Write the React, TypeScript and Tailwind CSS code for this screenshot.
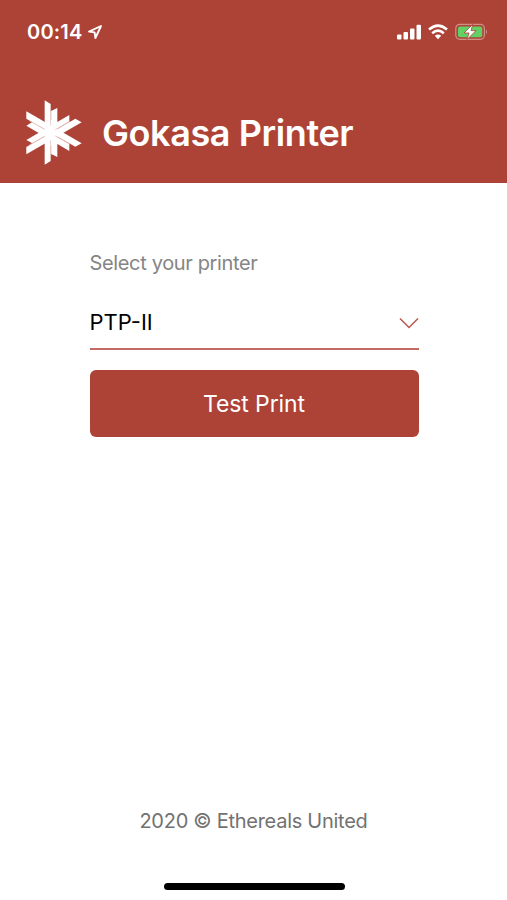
import React, { useState } from "react";

interface IconProps {
  className?: string;
}

const Logo: React.FC<IconProps> = ({ className }) => (
  <svg viewBox="48 30 168 195" className={className} fill="#fff">
    <polygon points="104,31 122,42 122,213 104,224" />
    <polygon points="122,64 142,54 142,201 122,191" />
    <polygon points="49,64 215,160 196,170 49,86" />
    <polygon points="49,193 49,171 196,86 215,97" />
    <path d="M49 107L67 96L178 161V183Z" />
    <path d="M49 150L178 75V96L67 160Z" />
    <path
      d="M58 92L104 118M58 165L104 139M136 119L178 94M136 138L178 162M123 60V90M123 168V195"
      fill="none"
      stroke="#e6bab5"
      strokeWidth="2.5"
    />
  </svg>
);

const StatusBar: React.FC = () => (
  <div className="flex justify-between items-center h-16 pl-[27px] pr-[18px] text-white">
    <div className="flex items-center gap-1">
      <span className="text-[20px] leading-6 font-semibold tracking-[0.2px]">
        00:14
      </span>
      <svg viewBox="0 0 16 16" className="w-4 h-4" fill="none" stroke="#fff">
        <path
          d="M14 2L2 7.6L7.6 8.4L8.4 14Z"
          strokeWidth="1.9"
          strokeLinejoin="round"
        />
      </svg>
    </div>
    <div className="flex items-center gap-[7px]">
      <svg viewBox="0 0 24 16" className="w-6 h-4" fill="#fff">
        <rect x="0" y="10.5" width="4.5" height="5" rx="1" />
        <rect x="6.5" y="8" width="4.5" height="7.5" rx="1" />
        <rect x="13" y="4.5" width="4.5" height="11" rx="1" />
        <rect x="19.5" y="0.8" width="4.5" height="14.7" rx="1" />
      </svg>
      <svg
        viewBox="0 0 20 16"
        className="w-5 h-4"
        fill="none"
        stroke="#fff"
        strokeWidth="2.6"
      >
        <path d="M1 5.6Q10 -2.2 19 5.6" />
        <path d="M4.2 9.2Q10 4.2 15.8 9.2" />
        <path d="M6.8 11.8Q10 9.2 13.2 11.8L10 15.2Z" fill="#fff" stroke="none" />
      </svg>
      <svg viewBox="0 0 34 18" className="w-[34px] h-[18px]">
        <rect
          x="0.8"
          y="1.3"
          width="28.6"
          height="15"
          rx="4"
          fill="none"
          stroke="#d09087"
          strokeWidth="1.2"
        />
        <rect x="3" y="3.4" width="24.2" height="10.8" rx="2" fill="#62d065" />
        <path d="M31 6.5Q33.2 8.8 31 11.2Z" fill="#d09087" />
        <path
          d="M17.8 1.2L9 10H14L12 16.6L21 7.6H16Z"
          fill="#fff"
          stroke="#ad4337"
          strokeWidth="0.8"
        />
      </svg>
    </div>
  </div>
);

const App: React.FC = () => {
  const [printer] = useState("PTP-II");

  return (
    <div className="flex flex-col h-[900px] w-full bg-white font-['Inter',sans-serif]">
      <header className="h-[183px] bg-[#ad4337] text-white">
        <StatusBar />
        <div className="flex items-center gap-5 pl-[26px] pt-[35px]">
          <Logo className="w-14 h-[65px]" />
          <h1 className="pt-0.5 text-[36px] leading-[65px] font-semibold tracking-[-0.4px] whitespace-nowrap">
            Gokasa Printer
          </h1>
        </div>
      </header>
      <main className="flex flex-col flex-1 w-[329px] ml-[89.5px] pt-[66px]">
        <label className="text-[20px] leading-7 tracking-[-0.35px] text-[#858585]">
          Select your printer
        </label>
        <button className="flex justify-between items-center h-[55px] mt-[18px] pt-0.5 border-b-2 border-[#c36b63] text-[22px] text-black">
          <span>{printer}</span>
          <svg
            viewBox="0 0 20 12"
            className="w-5 h-3"
            fill="none"
            stroke="#b9574d"
            strokeWidth="1.5"
          >
            <path d="M1 1.5L10 10.5L19 1.5" />
          </svg>
        </button>
        <button className="h-[67px] mt-5 pt-0.5 rounded-md bg-[#ad4337] text-[23px] tracking-[-0.1px] text-white">
          Test Print
        </button>
      </main>
      <footer className="flex flex-col items-center">
        <p className="text-[20px] leading-7 tracking-[-0.27px] text-[#727272]">
          2020 © Ethereals United
        </p>
        <div className="w-[181px] h-[7px] mt-12 mb-[10px] ml-px rounded-full bg-black" />
      </footer>
    </div>
  );
};

export default App;
